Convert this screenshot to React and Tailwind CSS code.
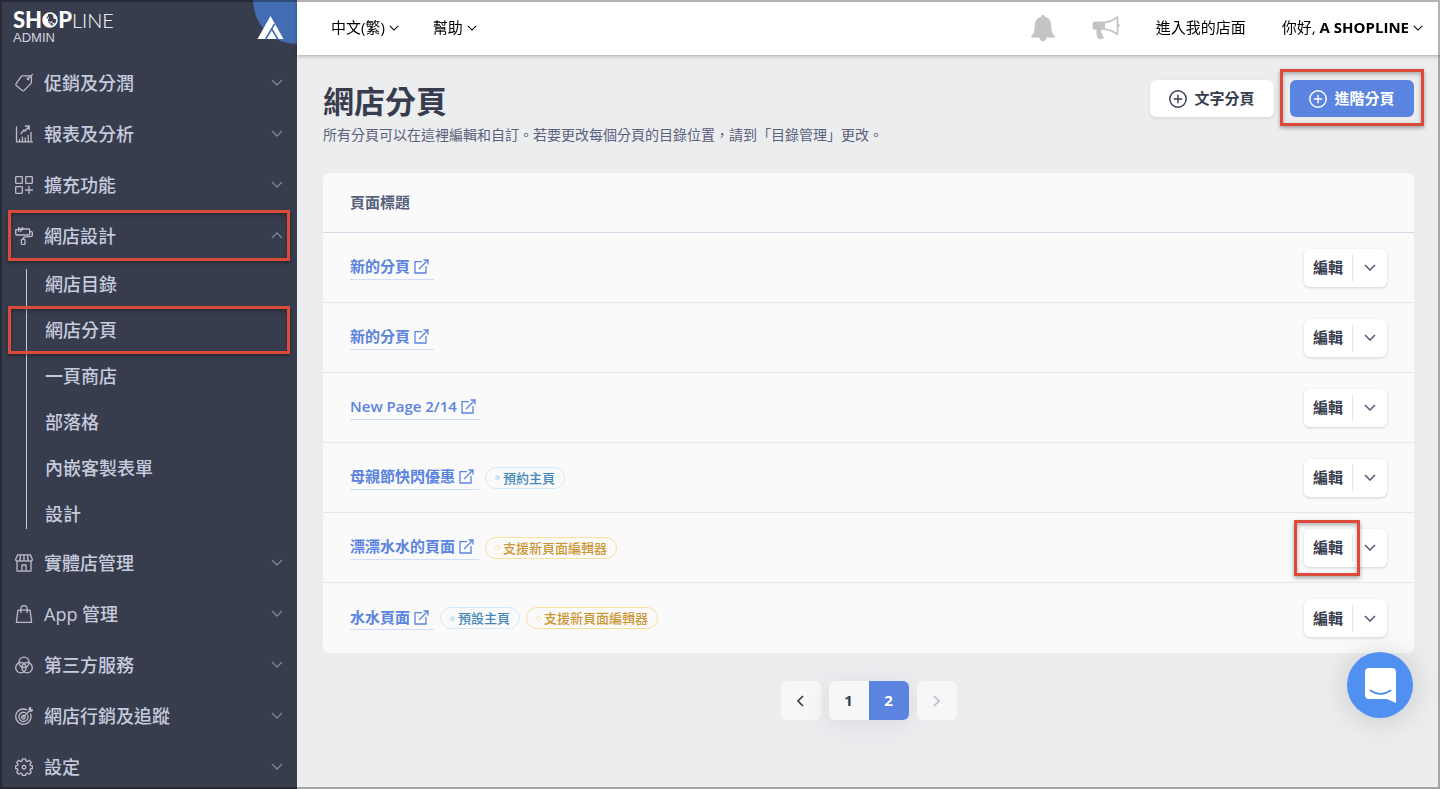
import React from "react";

const NAV_TOP = [
  { key: "promo", label: "促銷及分潤", icon: TagIcon },
  { key: "report", label: "報表及分析", icon: ChartIcon },
  { key: "extend", label: "擴充功能", icon: GridPlusIcon },
  { key: "design", label: "網店設計", icon: RollerIcon, open: true, marked: true },
];

const NAV_DESIGN = [
  { key: "menu", label: "網店目錄" },
  { key: "pages", label: "網店分頁", marked: true },
  { key: "onepage", label: "一頁商店" },
  { key: "blog", label: "部落格" },
  { key: "form", label: "內嵌客製表單" },
  { key: "setting", label: "設計" },
];

const NAV_BOTTOM = [
  { key: "retail", label: "實體店管理", icon: StoreIcon },
  { key: "app", label: "App 管理", icon: BagIcon },
  { key: "third", label: "第三方服務", icon: CirclesIcon },
  { key: "marketing", label: "網店行銷及追蹤", icon: TargetIcon },
  { key: "settings", label: "設定", icon: GearIcon },
];

const PAGES = [
  { id: 1, title: "新的分頁", badges: [] },
  { id: 2, title: "新的分頁", badges: [] },
  { id: 3, title: "New Page 2/14", badges: [] },
  { id: 4, title: "母親節快閃優惠", badges: [{ type: "home", label: "預約主頁" }] },
  {
    id: 5,
    title: "漂漂水水的頁面",
    badges: [{ type: "editor", label: "支援新頁面編輯器" }],
    marked: true,
  },
  {
    id: 6,
    title: "水水頁面",
    badges: [
      { type: "home", label: "預設主頁" },
      { type: "editor", label: "支援新頁面編輯器" },
    ],
  },
];

function NavSvg({ children }) {
  return (
    <svg
      viewBox="0 0 18 18"
      className="size-[18px] shrink-0 text-[#bfbbc8]"
      fill="none"
      stroke="currentColor"
      strokeWidth="1.3"
      strokeLinejoin="round"
      strokeLinecap="round"
      aria-hidden="true"
    >
      {children}
    </svg>
  );
}

function TagIcon() {
  return (
    <NavSvg>
      <path d="M7.6 1.8h7.6q1.2 0 1.2 1.2v5.2q0 .8-.6 1.4l-6.6 6.8q-1 1-2 0L1.3 11.4q-1-1 0-2l5-7q.5-.6 1.3-.6zM17.4.6l-4.7 4.7" />
      <path d="M12.2 4.3l1.4 1.4" />
    </NavSvg>
  );
}

function ChartIcon() {
  return (
    <NavSvg>
      <path d="M1.5 2v14.800h16M4.500 16.500v-2M7.400 16.500v-4.500M10.300 16.500v-3.500M13.200 16.500v-6M16 16.500v-9" />
      <path d="M6 8.500l3-3.500 1 1 4-4.500M10.500 1h3.600v3.600" />
    </NavSvg>
  );
}

function GridPlusIcon() {
  return (
    <NavSvg>
      <rect x="0.7" y="0.7" width="6.6" height="6.6" rx="0.5" />
      <rect x="10.7" y="0.7" width="6.6" height="6.6" rx="0.5" />
      <rect x="0.7" y="10.7" width="6.6" height="6.6" rx="0.5" />
      <path d="M14 10.5v7M10.5 14h7" />
    </NavSvg>
  );
}

function RollerIcon() {
  return (
    <NavSvg>
      <path d="M3.5 2h10.2q1 0 1 1v4q0 1-1 1H2Q.7 8 .7 6.7V3.5" />
      <path d="M3.7.3v4M5.8 2v2.3M7.5.3v2.5M.7 2.6h2M14.7 4.6h1.6q1 0 1 1v2.8q0 .8-.8.9l-7.2.9q-1 .1-1 1v1" />
      <rect x="6.4" y="12.2" width="3.600" height="5.4" rx="1" />
    </NavSvg>
  );
}

function StoreIcon() {
  return (
    <NavSvg>
      <path d="M2.5.9h13l1.8 4.300q0 2-2.100 2t-2.100-2q0 2-2.050 2T9 5.200q0 2-2.050 2t-2.050-2q0 2-2.100 2T.7 5.200zM5.300 1v4M9 1v4M12.700 1v4" />
      <path d="M2 7.500v9.600h14V7.500M7 17v-6h4v6" />
    </NavSvg>
  );
}

function BagIcon() {
  return (
    <NavSvg>
      <path d="M2.9 5.2h12.200l1.500 12.200H1.400z" />
      <path d="M5.900 7.500V4q0-3.400 3.100-3.400T12.100 4v3.500" />
    </NavSvg>
  );
}

function CirclesIcon() {
  return (
    <NavSvg>
      <circle cx="9" cy="6.3" r="5.2" />
      <circle cx="5.900" cy="11.7" r="5.2" />
      <circle cx="12.100" cy="11.7" r="5.2" />
    </NavSvg>
  );
}

function TargetIcon() {
  return (
    <NavSvg>
      <path d="M11.5 2.7A7.600 7.600 0 1 0 15.500 7" />
      <path d="M10.300 5.700A4.600 4.600 0 1 0 12.700 8.200" />
      <path d="M9.200 8.700a1.800 1.800 0 1 0 .8 1M8.300 10l6-6M14.200 4V1.300L15.500.4v2.400h2.300l-1.100 1.400z" />
    </NavSvg>
  );
}

function GearIcon() {
  return (
    <NavSvg>
      <path d="M7.500.8h3l.5 2.300 1.200.5 2-1.300 2.100 2.100-1.300 2 .5 1.200 2 .4v2.500l-2 .5-.5 1.200 1.300 2-2.100 2.100-2-1.300-1.200.5-.5 2h-3l-.5-2-1.200-.5-2 1.300-2.100-2.100 1.300-2-.5-1.200-2-.5V8l2-.4.5-1.200-1.300-2 2.100-2.100 2 1.300L7 3.100z" />
      <circle cx="9" cy="9.2" r="1.8" />
    </NavSvg>
  );
}

function Chevron({ className, d = "M1 1l5 5 5-5", viewBox = "0 0 12 7", width = 1.3 }) {
  return (
    <svg viewBox={viewBox} className={className} fill="none" stroke="currentColor" strokeWidth={width} aria-hidden="true">
      <path d={d} />
    </svg>
  );
}

function PlusCircle() {
  return (
    <svg viewBox="0 0 18 18" className="size-[18px]" fill="none" stroke="currentColor" strokeWidth="1.4" aria-hidden="true">
      <circle cx="9" cy="9" r="8.2" />
      <path d="M9 4.8v8.400M4.800 9h8.400" />
    </svg>
  );
}

function ExternalIcon() {
  return (
    <svg viewBox="0 0 15 15" className="size-[15px]" fill="none" stroke="currentColor" strokeWidth="1.3" aria-hidden="true">
      <path d="M8 2.7H1V14h11V7M9.500 1H14v4.500M14 1L5 10" />
    </svg>
  );
}

// red frame with a soft shadow, laid over the thing it points at
function Mark({ className }) {
  return (
    <span
      className={`pointer-events-none absolute border-3 border-[#dc4a3a] shadow-[0_2px_4px_rgba(0,0,0,0.35),inset_0_2px_4px_rgba(0,0,0,0.3)] ${className}`}
    />
  );
}

function Logo() {
  return (
    <div className="flex h-[57px] shrink-0 items-start justify-between pl-[13px]">
      <a href="#home" className="mt-[9px] block font-['Lato',sans-serif] text-white">
        <span className="flex items-baseline text-[22px] leading-[22px]">
          <span className="font-black">SH</span>
          <svg viewBox="0 0 16 16" className="size-4" aria-label="O">
            <circle cx="8" cy="8" r="7" fill="none" stroke="#fff" strokeWidth="1.5" />
            <path d="M1 8Q1.500 3 6.500 1q-1.500 3.500 1 5-2.500 1.500-1 4.500l4 4Q2.500 16 1 8z" fill="#fff" />
            <path d="M10 2.500q4 1 4.500 5l-3-1q.5-2.500-1.500-4zM10 11.500l3-1-2 3z" fill="#fff" />
            <circle cx="5.500" cy="5.500" r="0.900" fill="#383d4e" />
            <path d="M6.500 9.500l4 1M7.500 12l3-3" stroke="#fff" strokeWidth="0.700" />
          </svg>
          <span className="font-black">P</span>
          <span className="text-xl leading-[22px] font-light">LINE</span>
        </span>
        <span className="block font-['Liberation_Sans',sans-serif] text-[13px] leading-[14px] text-[#d3d5dc]">
          ADMIN
        </span>
      </a>
      <svg viewBox="0 0 44 44" className="size-11" aria-hidden="true">
        <path d="M0 0h44v44A44 44 0 0 1 0 0z" fill="#436db3" />
        <path d="M17.500 16L30.500 39H4.500z" fill="#fff" />
        <path d="M21.500 24L12.500 39.500M18.800 29L25 39.500" stroke="#436db3" strokeWidth="1.600" fill="none" />
      </svg>
    </div>
  );
}

function NavItem({ item }) {
  const Icon = item.icon;

  return (
    <li>
      <button
        type="button"
        aria-expanded={Boolean(item.open)}
        className="relative flex h-[51px] w-full items-center gap-[11px] pr-[14px] pl-[15px] text-left text-lg font-medium"
      >
        <Icon />
        <span className="flex-1">{item.label}</span>
        <Chevron
          className="h-[7px] w-3 text-[#7d8499]"
          d={item.open ? "M1 6l5-5 5 5" : "M1 1l5 5 5-5"}
        />
        {item.marked && <Mark className="inset-y-0 right-[7px] left-2" />}
      </button>
    </li>
  );
}

function Sidebar() {
  return (
    <aside className="flex w-[297px] shrink-0 flex-col overflow-y-auto bg-[#383d4e] text-[#c6cbde] [scrollbar-width:none]">
      <Logo />
      <nav>
        <ul>
          {NAV_TOP.map((item) => (
            <NavItem key={item.key} item={item} />
          ))}
        </ul>
        <div className="flex pl-[26px]">
          <div className="my-2 w-px bg-[#c6cbde]" />
          <ul className="flex-1">
            {NAV_DESIGN.map((item) => (
              <li key={item.key}>
                <a
                  href={`#${item.key}`}
                  className="relative flex h-[46px] items-center pl-[18px] text-lg font-medium"
                >
                  {item.label}
                  {item.marked && <Mark className="-inset-y-px right-[7px] -left-[19px]" />}
                </a>
              </li>
            ))}
          </ul>
        </div>
        <ul>
          {NAV_BOTTOM.map((item) => (
            <NavItem key={item.key} item={item} />
          ))}
        </ul>
      </nav>
    </aside>
  );
}

function TopBar() {
  return (
    <header className="relative flex h-[55px] shrink-0 items-center justify-between bg-white pr-[17px] pl-[34px] text-[15px] text-black shadow-[0_1px_4px_rgba(0,0,0,0.3)]">
      <div className="flex items-center gap-[34px]">
        <button type="button" className="flex items-center gap-1">
          中文(繁)
          <Chevron className="h-[6px] w-[10px]" />
        </button>
        <button type="button" className="flex items-center gap-1">
          幫助
          <Chevron className="h-[6px] w-[10px]" />
        </button>
      </div>
      <div className="flex items-center gap-9">
        <button type="button" aria-label="通知">
          <svg viewBox="0 0 26 28" className="h-7 w-[26px]" fill="#c4c4c4" aria-hidden="true">
            <path d="M13 .8q1.500 0 1.800 2 5.900 1.400 6.400 8.200.3 7.500 1.800 9 2 1.500 2 3.500H1q0-2 2-3.500 1.500-1.500 1.800-9 .5-6.800 6.400-8.200.3-2 1.800-2zM9.500 23.500h7q-.3 3.800-3.500 3.800t-3.500-3.800z" />
          </svg>
        </button>
        <button type="button" aria-label="公告">
          <svg viewBox="0 0 28 25" className="h-[25px] w-7" aria-hidden="true">
            <path d="M2.500 6.500H13v8.300H8.800l.5 3q1.500 1 1 2 .2 1.700 1.700 2.500-.5 1.700-3 1.700-3.200 0-3.700-1.500Q4 18.500 4.500 14.800h-2Q.6 14.800.6 13V8.500q0-2 1.900-2z" fill="#c4c4c4" />
            <path d="M12.500 7.500Q20 6.500 25.500 2v17.500q-5.500-4.500-13-5.300" fill="none" stroke="#c4c4c4" strokeWidth="1.700" strokeLinejoin="round" />
            <path d="M26 8q1.600.7 1.600 2.300T26 12.600z" fill="#c4c4c4" />
          </svg>
        </button>
        <a href="#store">進入我的店面</a>
        <button type="button" className="flex items-center gap-1">
          <span>
            你好, <span className="font-bold">A SHOPLINE</span>
          </span>
          <Chevron className="h-[6px] w-[10px]" />
        </button>
      </div>
    </header>
  );
}

function Badge({ type, label }) {
  const home = type === "home";

  return (
    <span
      className={`flex h-[22px] items-center gap-[3px] rounded-full border px-[9px] text-[13px] leading-5 font-medium ${
        home ? "border-[#d5ebf9] text-[#4387b9]" : "border-[#f8e0a0] text-[#cc9736]"
      }`}
    >
      <span
        className={`size-[5px] rounded-full ${
          home ? "bg-[#cbe5f8]" : "border border-[#fbe6b5]"
        }`}
      />
      {label}
    </span>
  );
}

function PageTable() {
  return (
    <table className="mt-[27px] w-full border-separate border-spacing-0 rounded-md bg-[#fafafa] text-[15px]">
      <thead>
        <tr>
          <th colSpan={2} className="h-[60px] border-b border-[#d3dbe6] px-[27px] text-left font-bold text-[#59617c]">
            頁面標題
          </th>
        </tr>
      </thead>
      <tbody className="[&>tr:last-child>td]:border-b-0">
        {PAGES.map((page) => (
          <tr key={page.id}>
            <td className="h-[70px] border-b border-[#e3e7f0] pl-[27px]">
              <div className="flex items-center gap-[6px]">
                <a
                  href={`#page-${page.id}`}
                  className="flex h-6 items-center gap-1 border-b border-[#cfddf8] pr-[5px] pb-px font-semibold text-[#5b84e0]"
                >
                  {page.title}
                  <ExternalIcon />
                </a>
                {page.badges.map((badge) => (
                  <Badge key={badge.label} {...badge} />
                ))}
              </div>
            </td>
            <td className="h-[70px] border-b border-[#e3e7f0] pr-[27px]">
              <div className="relative ml-auto flex h-[38px] w-[83px] items-center rounded-md bg-white text-[#383d4e] shadow-[0_1px_3px_rgba(56,61,78,0.2)]">
                <button type="button" className="h-full w-12 font-bold">
                  編輯
                </button>
                <span className="h-7 w-px bg-[#e3e7f0]" />
                <button type="button" aria-label="更多" className="flex h-full flex-1 items-center justify-center">
                  <Chevron className="h-[7px] w-3 text-[#565e7c]" width={1.6} />
                </button>
                {page.marked && <Mark className="-inset-y-[9px] right-[27px] -left-[10px]" />}
              </div>
            </td>
          </tr>
        ))}
      </tbody>
    </table>
  );
}

function Pagination() {
  return (
    <nav aria-label="分頁" className="mt-7 flex justify-center gap-2 text-[15px] font-bold text-[#383d4e]">
      <button type="button" aria-label="上一頁" className="flex h-[39px] w-10 items-center justify-center rounded-md bg-[#f7f7f7]">
        <Chevron className="h-3 w-[7px]" viewBox="0 0 7 12" d="M6 1L1 6l5 5" width={1.6} />
      </button>
      <div className="flex overflow-hidden rounded-md shadow-[0_4px_24px_rgba(56,61,78,0.1)]">
        <button type="button" className="h-[39px] w-10 bg-[#f7f7f7]">
          1
        </button>
        <button type="button" aria-current="page" className="h-[39px] w-10 bg-[#5b84e0] text-white">
          2
        </button>
      </div>
      <button type="button" disabled aria-label="下一頁" className="flex h-[39px] w-10 items-center justify-center rounded-md bg-[#f7f7f7] text-[#b9bdcd]">
        <Chevron className="h-3 w-[7px]" viewBox="0 0 7 12" d="M1 1l5 5-5 5" width={1.6} />
      </button>
    </nav>
  );
}

export default function App() {
  return (
    <div className="flex h-screen bg-[#ecedef] font-['Open_Sans','Noto_Sans_CJK_TC',sans-serif]">
      <Sidebar />

      <div className="flex min-w-0 flex-1 flex-col">
        <TopBar />
        <main className="flex-1 overflow-y-auto px-[26px] pt-[25px] [scrollbar-width:none]">
          <div className="flex items-start justify-between">
            <div className="pt-px">
              <h1 className="text-[31px] leading-10 font-bold text-[#383d4e]">網店分頁</h1>
              <p className="mt-[3px] text-sm leading-[22px] text-[#59617c]">
                所有分頁可以在這裡編輯和自訂。若要更改每個分頁的目錄位置，請到「目錄管理」更改。
              </p>
            </div>
            <div className="flex gap-4 text-[15px] font-bold">
              <button
                type="button"
                className="flex h-[37px] w-[124px] items-center justify-center gap-[7px] rounded-md bg-white text-[#383d4e] shadow-[0_1px_3px_rgba(56,61,78,0.15)]"
              >
                <PlusCircle />
                文字分頁
              </button>
              <div className="relative">
                <button
                  type="button"
                  className="flex h-[37px] w-[124px] items-center justify-center gap-[7px] rounded-md bg-[#5b84e0] text-white"
                >
                  <PlusCircle />
                  進階分頁
                </button>
                <Mark className="-inset-x-[10px] -top-[11px] -bottom-[9px]" />
              </div>
            </div>
          </div>
          <PageTable />
          <Pagination />
        </main>
      </div>

      <button
        type="button"
        aria-label="線上客服"
        className="fixed right-[27px] bottom-[71px] flex size-[66px] items-center justify-center rounded-full bg-[#4f90f1] shadow-[0_2px_30px_rgba(0,0,0,0.16)]"
      >
        <svg viewBox="0 0 31 35" className="h-[35px] w-[31px]" aria-hidden="true">
          <path d="M4 0h23q4 0 4 4v31l-9-4H4q-4 0-4-4V4q0-4 4-4z" fill="#fff" />
          <path d="M5.500 22.500q10 7 20 0" fill="none" stroke="#4f90f1" strokeWidth="2" strokeLinecap="round" />
        </svg>
      </button>

      <div className="pointer-events-none fixed inset-0 border-2 border-black/30" />
    </div>
  );
}
